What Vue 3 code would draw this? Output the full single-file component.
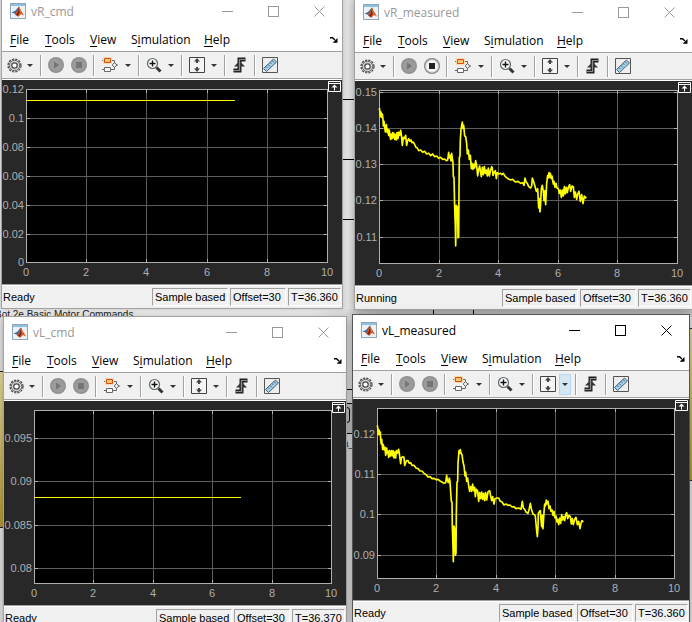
<script setup>
const even = [0, 2, 4, 6, 8, 10]

const traceRight = '112,84 114,96 115,110 117,96 119,112 121,102 123,118 124,138 126,124 128,140 130,156 132,148 133,134 136,158 138,148 140,166 142,150 144,168 146,178 148,162 150,176 152,158 154,172 156,160 158,178 160,164 163,180 165,158 168,176 170,156 173,166 176,151 178,164 181,196 184,172 187,176 191,166 194,196 197,182 200,176 204,184 207,180 210,188 214,186 218,194 222,202 226,204 230,212 236,210 242,217 248,214 254,222 260,220 266,227 272,222 278,230 284,228 290,235 296,232 302,238 308,237 313,242 317,240 320,217 322,234 325,226 327,243 329,220 331,236 333,248 334,290 336,292 338,380 340,440 341,498 343,376 345,400 347,380 348,474 350,470 351,330 352,232 354,228 355,180 357,150 359,136 361,126 363,145 365,136 368,168 371,170 374,190 376,222 379,210 382,238 385,226 388,266 390,250 393,268 396,252 398,264 401,242 404,258 407,288 410,268 413,258 415,272 418,290 421,262 424,284 427,260 430,280 433,270 436,288 439,264 442,288 445,274 449,260 451,264 453,286 457,276 460,272 463,296 466,278 470,282 476,280 480,284 484,280 490,290 498,296 506,300 512,298 520,306 528,304 536,310 542,308 546,316 549,294 552,306 556,310 560,320 566,324 569,318 571,294 574,302 578,316 583,334 587,326 590,384 592,356 594,396 596,370 598,326 601,316 604,334 606,362 609,332 611,374 614,310 617,286 619,294 621,278 623,292 625,280 628,296 630,288 634,312 636,304 639,322 642,310 645,324 649,326 652,340 655,330 658,352 661,330 664,348 667,320 670,342 673,322 676,338 679,322 683,314 686,334 690,318 694,320 697,352 700,336 704,358 707,342 711,334 715,364 719,344 723,371 727,348 730,354 733,350'

const traceLeft = '106,76 108,88 109,104 111,90 113,104 115,96 116,120 118,132 119,118 122,148 124,134 127,150 129,142 131,166 134,144 136,160 138,154 140,172 142,152 145,168 148,152 151,168 153,152 156,174 158,156 161,174 163,152 166,160 170,148 173,168 176,191 178,174 182,170 186,172 188,196 191,188 194,182 198,182 202,190 206,188 210,196 216,196 222,204 228,206 234,213 240,213 246,220 252,224 258,231 264,230 270,236 276,235 282,239 288,238 294,243 300,246 306,250 311,248 314,226 316,240 319,248 322,234 324,244 326,276 328,304 330,306 331,380 333,440 334,485 336,378 338,390 340,466 342,460 343,340 345,246 347,244 348,190 351,152 353,160 355,149 357,160 360,164 363,186 366,198 369,228 371,216 374,244 377,234 380,258 383,274 386,260 389,274 392,252 395,272 398,262 400,290 403,268 407,274 410,304 413,278 416,296 419,276 422,298 425,280 428,302 431,278 434,300 438,276 443,272 446,288 449,302 452,290 456,312 459,296 464,294 470,294 475,304 480,306 486,315 492,312 498,316 504,315 510,321 516,320 522,326 530,324 537,328 541,304 544,324 548,328 552,336 558,340 561,330 565,310 568,326 573,342 577,344 580,348 583,382 586,410 588,384 589,340 593,334 595,332 597,360 599,380 601,346 603,386 606,336 608,312 610,318 613,300 615,312 618,304 621,326 624,318 627,334 630,330 633,346 636,334 639,354 642,348 645,366 647,358 650,374 653,354 656,370 659,344 662,360 665,350 668,362 671,344 674,338 677,356 681,346 685,350 688,372 691,356 694,374 698,358 702,352 706,374 710,364 714,386 717,370 720,362 724,366'

const windows = [
  {
    name: 'vR_cmd', id: 'vr-cmd', status: 'Ready', time: '36.360', w: 340, h: 204,
    box: { l: 24, r: 325, t: 9, b: 182 },
    ticks: [['0.12', 9], ['0.1', 38], ['0.08', 67], ['0.06', 96], ['0.04', 125], ['0.02', 154], ['0', 182]],
    level: { y: 20, end: 232 },
  },
  {
    name: 'vR_measured', id: 'vr-measured', status: 'Running', time: '36.360', running: true, w: 337, h: 204,
    box: { l: 24, r: 322, t: 9, b: 182 },
    ticks: [['0.15', 11], ['0.14', 47], ['0.13', 83], ['0.12', 119], ['0.11', 156]],
    trace: traceRight, shift: 'translate(-13 -1) scale(.33333)',
  },
  {
    name: 'vL_cmd', id: 'vl-cmd', status: 'Ready', time: '36.370', w: 342, h: 204,
    box: { l: 30, r: 327, t: 9, b: 182 },
    ticks: [['0.095', 37], ['0.09', 80], ['0.085', 124], ['0.08', 167]],
    level: { y: 96, end: 236 },
  },
  {
    name: 'vL_measured', id: 'vl-measured', status: 'Ready', time: '36.360', active: true, w: 336, h: 201,
    box: { l: 24, r: 321, t: 9, b: 179 },
    ticks: [['0.12', 35], ['0.11', 75], ['0.1', 115], ['0.09', 156]],
    trace: traceLeft, shift: 'translate(-11 1) scale(.33333)',
  },
]

const menus = [
  ['', 'F', 'ile'],
  ['', 'T', 'ools'],
  ['', 'V', 'iew'],
  ['S', 'i', 'mulation'],
  ['', 'H', 'elp'],
]

const xAt = (box, v) => Math.round(box.l + ((box.r - box.l) * v) / 10)
</script>

<template>
  <main class="desktop">
    <div class="wire wire-1"></div>
    <div class="wire wire-2"></div>
    <div class="wire wire-3"></div>
    <div class="wire wire-4"></div>
    <div class="stem stem-1"></div>
    <div class="stem stem-2"></div>
    <div class="block block-left"></div>
    <div class="block block-right"></div>
    <div class="port"><span class="port-inner"></span></div>
    <span class="tag tag-port">a_</span>
    <div class="gutter"></div>
    <p class="caption">Bot 2e Basic Motor Commands</p>

    <section
      v-for="win in windows"
      :key="win.id"
      class="window"
      :class="[win.id, { active: win.active }]"
      :aria-label="win.name"
    >
      <header class="titlebar">
        <svg class="logo" viewBox="0 0 16 16" aria-hidden="true">
          <rect x=".5" y=".5" width="15" height="15" fill="#eef1f4" stroke="#8fa5b8" />
          <rect x="1" y="1" width="14" height="2" fill="#8cc0e4" />
          <path d="M1.500 9.500 5 8l4-4.500L8 11l-2 1.500-1.500-2z" fill="#2e6da4" />
          <path d="M4.500 10.500 6.500 9 9 3.500l1.500 3L14 12.500l-3-1.500-3 3-1.500-2z" fill="#d9541e" />
          <path d="M9 3.500 10 9l-2.500 4L6 12l2-3z" fill="#6d2415" />
          <path d="m9 3.500 1.500 4.500-.5 2.500z" fill="#f9a13a" />
        </svg>
        <h2>{{ win.name }}</h2>
        <div class="controls">
          <button aria-label="Minimize"><svg viewBox="0 0 11 11"><path d="M0 5.500h11" /></svg></button>
          <button aria-label="Maximize"><svg viewBox="0 0 11 11"><path d="M.5.5h10v10H.5z" /></svg></button>
          <button aria-label="Close"><svg viewBox="0 0 11 11"><path d="m.5.5 10 10m0-10-10 10" shape-rendering="auto" /></svg></button>
        </div>
      </header>

      <nav class="menubar">
        <button v-for="m in menus" :key="m[2]">{{ m[0] }}<u>{{ m[1] }}</u>{{ m[2] }}</button>
        <button class="dock" aria-label="Dock window">
          <svg viewBox="0 0 8 6"><path d="M0 .7h2.500L5 3" fill="none" stroke="#000" stroke-width="1.400" /><path d="M7.500 1v4.800H2.700z" fill="#000" /></svg>
        </button>
      </nav>

      <div class="toolbar">
        <div class="group first">
          <button class="tool gear" aria-label="Settings">
            <svg viewBox="0 0 16 16">
              <circle cx="8" cy="8" r="6.900" fill="none" stroke="#4a4a4a" stroke-width="1.400" stroke-dasharray="2.400 1.212" />
              <circle cx="8" cy="8" r="5.600" fill="#cfcfcf" stroke="#5a5a5a" />
              <circle cx="8" cy="8" r="2.900" fill="#fff" stroke="#4a4a4a" stroke-width="1.300" />
            </svg>
          </button>
          <button class="drop" aria-label="Settings options"></button>
        </div>
        <div class="group sim">
          <button class="tool" aria-label="Run">
            <svg viewBox="0 0 16 16"><circle cx="8" cy="8" r="8" fill="#919191" /><circle cx="8" cy="8" r="6.500" fill="#9b9b9b" /><path d="m6 4.500 5 3.500-5 3.500z" fill="#757575" /></svg>
          </button>
          <button class="tool" aria-label="Stop">
            <svg viewBox="0 0 16 16">
              <template v-if="win.running">
                <circle cx="8" cy="8" r="7.400" fill="#dcdcdc" stroke="#858585" stroke-width="1.200" />
                <circle cx="8" cy="8" r="5.500" fill="#f8f8f8" />
                <path d="M5 5h6v6H5z" fill="#222" />
              </template>
              <template v-else>
                <circle cx="8" cy="8" r="8" fill="#919191" /><circle cx="8" cy="8" r="6.500" fill="#9b9b9b" />
                <path d="M5 5h6v6H5z" fill="#757575" />
              </template>
            </svg>
          </button>
        </div>
        <div class="group">
          <button class="tool wide" aria-label="Highlight block">
            <svg viewBox="0 0 16 16">
              <path d="M0 3.500h2M10 3.500h2.500V6M0 12.500h2M8 12.500h4.500V10M14 8h2" fill="none" stroke="#666" />
              <rect x="1" y="0" width="9" height="7" fill="#fbd9b0" />
              <path d="M2.500 1.500h6v4h-6z" fill="#ffc273" stroke="#d2500b" />
              <path d="M2.500 10.500h6v4h-6z" fill="#fff" stroke="#666" />
              <path d="m12.500 5.500 2.200 2.500-2.200 2.500L10.300 8z" fill="#fff" stroke="#555" />
            </svg>
          </button>
          <button class="drop" aria-label="Highlight options"></button>
        </div>
        <div class="group">
          <button class="tool" aria-label="Zoom in">
            <svg viewBox="0 0 16 16">
              <path d="m10.500 10.500 4 4" stroke="#333" stroke-width="3" />
              <circle cx="6.500" cy="6.500" r="5" fill="#f3fafd" stroke="#666" stroke-width="1.200" />
              <path d="M3.500 6.500h6m-3-3v6" stroke="#111" stroke-width="1.400" />
            </svg>
          </button>
          <button class="drop" aria-label="Zoom options"></button>
        </div>
        <div class="group">
          <button class="tool" aria-label="Scale Y axis">
            <svg viewBox="0 0 16 16">
              <path d="M.5.5h15v15H.5z" fill="#f4f4f4" stroke="#444" />
              <path d="M8 1 5 4.500h2V6h2V4.500h2zM8 15l3-3.500H9V10H7v1.500H5z" fill="#444" />
            </svg>
          </button>
          <button class="drop" :class="{ hot: win.active }" aria-label="Scale options"></button>
        </div>
        <div class="group">
          <button class="tool" aria-label="Triggers">
            <svg viewBox="0 0 16 16">
              <path d="M1.500 13.500h6v-11h6" fill="none" stroke="#222" stroke-width="4" />
              <path d="M7.500 4 13 9.500H2z" fill="#333" />
              <path d="M1 13.500h6.500v-11H13" fill="none" stroke="#8c8c8c" stroke-width="1.200" />
            </svg>
          </button>
        </div>
        <div class="group">
          <button class="tool" aria-label="Measurements">
            <svg viewBox="0 0 16 16">
              <path d="M.5.5h15v15H.5z" fill="#eee" stroke="#555" />
              <path d="M1.500 11.500 11.500 2 14.500 5 4.500 14.500z" fill="#a4d0e8" stroke="#42637a" />
              <path d="m4 9.500 1.500 1.500M6 7.500 8 9.500M8 5.500 9.500 7m.5-3.500 2 2" stroke="#294f69" stroke-width=".8" />
            </svg>
          </button>
        </div>
      </div>

      <div class="scope">
        <svg class="chart" :viewBox="`0 0 ${win.w} ${win.h}`" role="img" :aria-label="`${win.name} plot`">
          <rect :x="win.box.l" :y="win.box.t" :width="win.box.r - win.box.l" :height="win.box.b - win.box.t" fill="#000" />
          <g class="grid">
            <path v-for="v in even" :key="v" :d="`M${xAt(win.box, v) + 0.5} ${win.box.t}V${win.box.b}`" />
            <path v-for="t in win.ticks" :key="t[0]" :d="`M${win.box.l} ${t[1] + 0.5}H${win.box.r}`" />
          </g>
          <g class="axes">
            <path :d="`M${win.box.l + 0.5} ${win.box.t + 0.5}H${win.box.r + 0.5}V${win.box.b + 0.5}H${win.box.l + 0.5}Z`" />
            <path v-for="v in even" :key="v" :d="`M${xAt(win.box, v) + 0.5} ${win.box.t}v4M${xAt(win.box, v) + 0.5} ${win.box.b}v-3`" />
            <path v-for="t in win.ticks" :key="t[0]" :d="`M${win.box.l} ${t[1] + 0.5}h4M${win.box.r} ${t[1] + 0.5}h-3`" />
          </g>
          <path v-if="win.level" class="level" :d="`M${win.box.l} ${win.level.y + 0.5}H${win.level.end + 1}`" />
          <polyline v-else class="trace" :points="win.trace" :transform="win.shift" />
          <text v-for="t in win.ticks" :key="t[0]" :x="win.box.l - 2" :y="t[1] + 4" text-anchor="end">{{ t[0] }}</text>
          <text v-for="v in even" :key="v" :x="xAt(win.box, v)" :y="win.box.b + 14" text-anchor="middle">{{ v }}</text>
        </svg>
        <button class="expand" aria-label="Maximize axes">
          <svg viewBox="0 0 13 11">
            <path d="M.5.5h12v10H.5zM1 2.500h11" fill="none" stroke="#fff" />
            <path d="M6.500 3.500 3.500 6.500H6v3h1v-3h2.500z" fill="#fff" />
          </svg>
        </button>
      </div>

      <footer class="status">
        <span class="state">{{ win.status }}</span>
        <span class="cell sample">Sample based</span>
        <span class="cell offset">Offset=30</span>
        <span class="cell time">T={{ win.time }}</span>
      </footer>
    </section>
  </main>
</template>

<style>
body {
  margin: 0;
  overflow: hidden;
}
</style>

<style scoped>
.desktop {
  position: relative;
  height: 100vh;
  overflow: hidden;
  background: #e6e6e6;
  font-family: "Open Sans", "Noto Sans", sans-serif;
  font-size: 12px;
}
.gutter {
  position: absolute;
  left: 0;
  right: 0;
  top: 309px;
  height: 8px;
  background: linear-gradient(90deg, #efefef 0 45%, #d0d0d0 55%);
}
.wire,
.stem,
.block,
.port,
.tag {
  position: absolute;
}
.wire {
  left: 340px;
  width: 20px;
  height: 1px;
  background: #000;
}
.wire-1 { top: 99px; }
.wire-2 { top: 159px; }
.wire-3 { top: 219px; }
.wire-4 { top: 389px; }
.stem {
  z-index: 3;
  top: 310px;
  width: 1px;
  height: 4px;
  background: #000;
}
.stem-1 { left: 433px; }
.stem-2 { left: 473px; }
.block {
  border: 1px solid #222;
  background: linear-gradient(#e8dd9e, #b49a36);
}
.block-left {
  left: -20px;
  top: 371px;
  width: 40px;
  height: 155px;
}
.block-right {
  left: 670px;
  top: 328px;
  width: 40px;
  height: 151px;
}
.port {
  left: 310px;
  top: 403px;
  width: 44px;
  height: 31px;
  padding: 3px 5px;
  box-sizing: border-box;
  border: 1px solid #000;
  background: #c8c8c8;
}
.port-inner {
  display: block;
  width: 32px;
  height: 14px;
  border: 1px solid #000;
  border-radius: 3px;
}
.tag {
  font: 10px/12px "Liberation Sans", sans-serif;
  color: #333;
}
.tag-port {
  left: 343px;
  top: 438px;
}
.caption {
  position: absolute;
  left: -5px;
  top: 308px;
  margin: 0;
  font: 10px/13px "Liberation Sans", sans-serif;
  color: #222;
}
.window {
  position: absolute;
  display: flex;
  flex-direction: column;
  box-sizing: border-box;
  z-index: 2;
  border: 1px solid #a2a2a2;
  background: #fff;
  box-shadow: 0 2px 9px #0005;
}
.window.active {
  border-color: #555;
}
.vr-cmd {
  left: 1px;
  top: -5px;
  width: 342px;
  z-index: 1;
  box-shadow: 0 0 5px #0003;
}
.caption {
  z-index: 1;
}
.vr-measured { left: 354px; top: -4px; width: 339px; }
.vl-cmd { left: 3px; top: 316px; width: 344px; }
.vl-measured { left: 352px; top: 314px; width: 338px; }

button {
  display: flex;
  align-items: center;
  justify-content: center;
  padding: 0;
  border: 0;
  background: none;
  font: inherit;
  color: inherit;
}
.titlebar {
  display: flex;
  align-items: center;
  height: 30px;
  padding-left: 8px;
  color: #999;
}
.active .titlebar {
  color: #000;
}
.logo {
  width: 16px;
  height: 16px;
}
h2 {
  margin: 0 auto 0 5px;
  font-size: 12px;
  font-weight: 400;
}
.controls {
  display: flex;
}
.controls button {
  width: 46px;
  height: 28px;
}
.controls svg {
  width: 11px;
  height: 11px;
  fill: none;
  stroke: currentColor;
  shape-rendering: crispEdges;
}
.menubar {
  display: grid;
  grid-template-columns: 35px 45px 41px 73px 30px 1fr;
  align-items: center;
  height: 23px;
  padding: 2px 0 0 8px;
  border-bottom: 1px solid #a0a0a0;
}
.menubar button {
  display: block;
  text-align: left;
  white-space: nowrap;
}
.menubar u {
  text-underline-offset: 2px;
}
.menubar .dock {
  justify-self: end;
  width: 8px;
  margin-right: 4px;
}
.dock svg {
  display: block;
  width: 8px;
  height: 6px;
}
.toolbar {
  display: flex;
  align-items: center;
  height: 26px;
  background: #f0f0f0;
  border-bottom: 1px solid #a0a0a0;
  box-shadow: 0 1px #fff;
  margin-bottom: 1px;
}
.group {
  display: flex;
  align-items: center;
  gap: 1px;
  height: 21px;
  padding: 0 4px;
  border-right: 1px solid #a0a0a0;
  box-shadow: 1px 0 #fff;
  margin-right: 1px;
}
.group.first {
  padding-left: 3px;
}
.group.sim {
  gap: 3px;
}
.group:last-child {
  border: 0;
  box-shadow: none;
}
.tool {
  width: 20px;
  height: 20px;
}
.tool.gear {
  width: 18px;
}
.tool.wide {
  width: 22px;
}
.tool svg {
  width: 16px;
  height: 16px;
}
.gear svg {
  width: 15px;
  height: 15px;
}
.drop {
  width: 12px;
  height: 21px;
}
.drop::before {
  content: "";
  border: 3px solid transparent;
  border-top-color: #333;
  border-bottom: 0;
}
.drop.hot {
  background: #d5e6f5;
  box-shadow: inset 0 0 0 1px #b8d6ef;
}
.scope {
  position: relative;
  background: #282828;
}
.chart {
  display: block;
  width: 100%;
}
.chart text {
  font: 11px "Liberation Sans", sans-serif;
  fill: #afafaf;
}
.grid path {
  stroke: #5c5c5c;
  shape-rendering: crispEdges;
}
.axes path {
  fill: none;
  stroke: #afafaf;
  shape-rendering: crispEdges;
}
.level {
  stroke: #ff0;
  shape-rendering: crispEdges;
}
.trace {
  fill: none;
  stroke: #ff0;
  stroke-width: 5;
  stroke-linejoin: round;
}
.expand {
  position: absolute;
  top: 1px;
  right: 1px;
}
.expand svg {
  width: 13px;
  height: 11px;
}
.status {
  display: flex;
  align-items: center;
  gap: 2px;
  height: 23px;
  padding-right: 1px;
  border-top: 1px solid #a0a0a0;
  background: #f0f0f0;
  box-shadow: inset 0 1px #fff;
  font: 11px/13px "Liberation Sans", sans-serif;
  color: #000;
}
.state {
  margin-right: auto;
  padding: 1px 0 0 1px;
}
.cell {
  box-sizing: border-box;
  height: 18px;
  padding: 2px 0 0 2px;
  border: 1px solid;
  border-color: #a0a0a0 #fff #fff #a0a0a0;
  white-space: nowrap;
}
.sample { width: 76px; }
.offset { width: 56px; }
.time { width: 53px; }
</style>
